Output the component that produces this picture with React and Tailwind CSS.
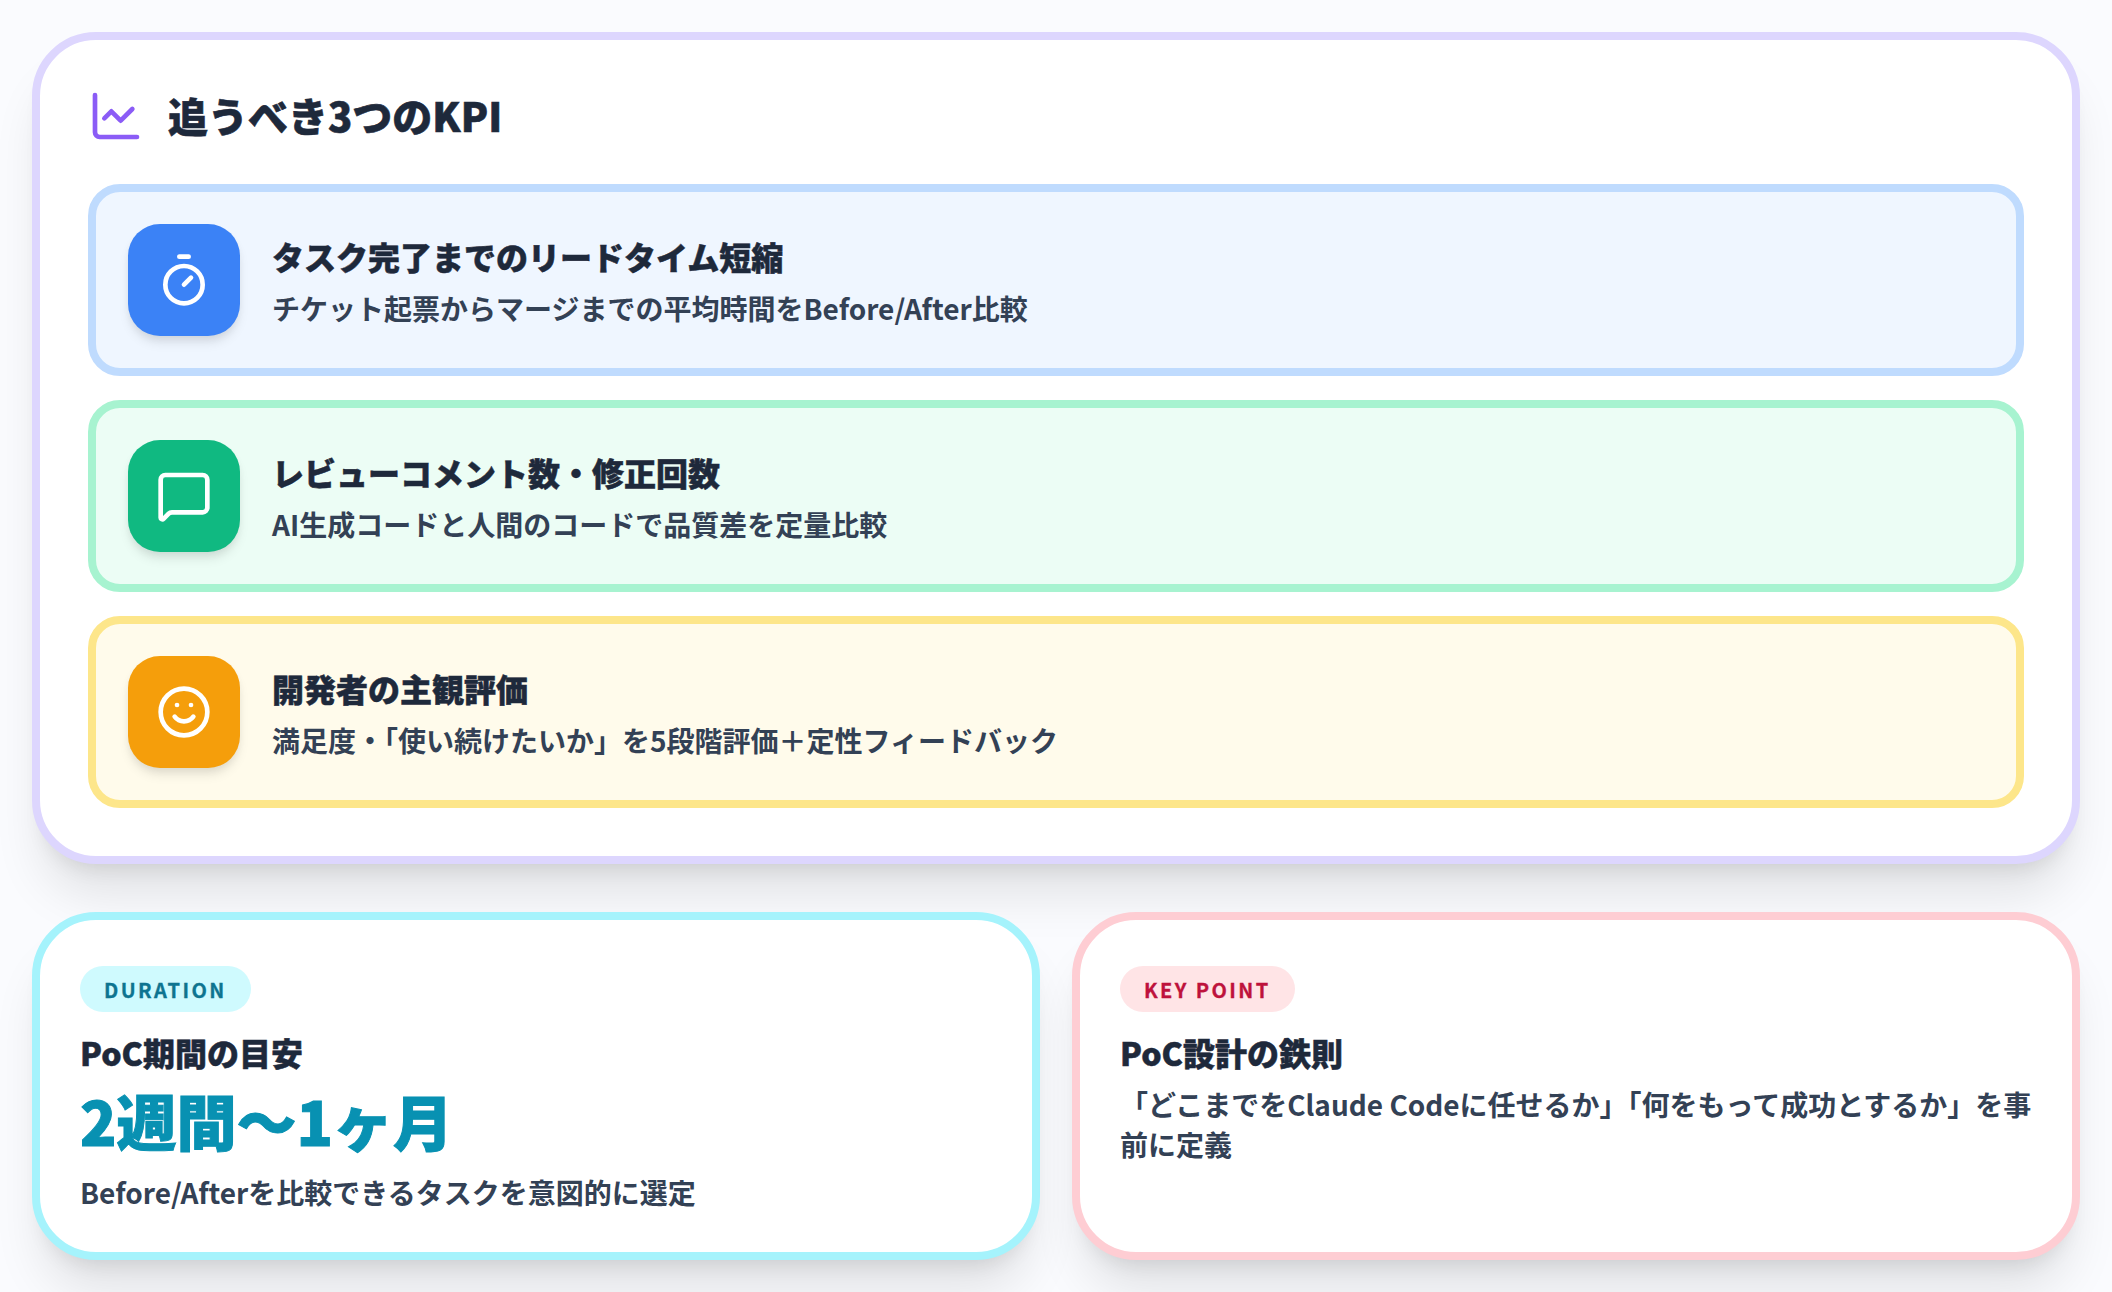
import React from "react";
import { ChartLine, Timer, MessageSquare, Smile } from "lucide-react";

const kpis = [
  {
    title: "タスク完了までのリードタイム短縮",
    desc: "チケット起票からマージまでの平均時間をBefore/After比較",
    Icon: Timer,
    box: "bg-[#eff6ff] border-[#bfdbfe]",
    tile: "bg-[#3b82f6]",
  },
  {
    title: "レビューコメント数・修正回数",
    desc: "AI生成コードと人間のコードで品質差を定量比較",
    Icon: MessageSquare,
    box: "bg-[#ecfdf5] border-[#a7f3d0]",
    tile: "bg-[#10b981]",
  },
  {
    title: "開発者の主観評価",
    desc: "満足度・「使い続けたいか」を5段階評価＋定性フィードバック",
    Icon: Smile,
    box: "bg-[#fffbeb] border-[#fde68a]",
    tile: "bg-[#f59e0b]",
  },
];

const cardShadow = "shadow-[0_40px_50px_-10px_rgba(0,0,0,0.1),0_16px_20px_-12px_rgba(0,0,0,0.1)]";

const KpiRow = ({ title, desc, Icon, box, tile }) => (
  <div className={`flex items-center gap-8 rounded-[32px] border-8 p-8 ${box}`}>
    <div className={`flex size-28 shrink-0 items-center justify-center rounded-[32px] text-white shadow-[0_8px_12px_-2px_rgba(0,0,0,0.1),0_4px_8px_-2px_rgba(0,0,0,0.06)] ${tile}`}>
      <Icon size={56} />
    </div>
    <div>
      <p className="mb-1.5 text-[32px] leading-[50px] font-black text-[#1e293b] [-webkit-text-stroke:0.5px_#1e293b]">{title}</p>
      <p className="text-[28px] leading-[42px] font-semibold text-[#334155]">{desc}</p>
    </div>
  </div>
);

const InfoCard = ({ border, badge, badgeClass, title, children }) => (
  <div className={`rounded-[64px] border-8 bg-white p-10 ${border} ${cardShadow}`}>
    <span className={`mt-1.5 inline-block rounded-full px-6 pt-[9px] pb-[7px] text-[20px] leading-[30px] font-bold tracking-[0.12em] [-webkit-text-stroke:0.3px] ${badgeClass}`}>
      {badge}
    </span>
    <p className="mt-4 text-[32px] leading-[48px] font-black text-[#1e293b] [-webkit-text-stroke:0.5px_#1e293b]">{title}</p>
    {children}
  </div>
);

export default function App() {
  return (
    <div className="flex min-h-[1292px] flex-col gap-12 bg-[#fafbfe] p-8 font-['Noto_Sans_CJK_JP','Noto_Sans',sans-serif]">
      <section className={`rounded-[64px] border-8 border-[#ddd6fe] bg-white p-12 ${cardShadow}`}>
        <div className="mb-10 flex items-center gap-6">
          <ChartLine size={56} className="text-[#8b5cf6]" />
          <h2 className="pb-0.5 text-[40px] leading-[54px] font-black text-[#1e293b] [-webkit-text-stroke:0.6px_#1e293b]">追うべき3つのKPI</h2>
        </div>
        <div className="flex flex-col gap-6">
          {kpis.map((kpi) => (
            <KpiRow key={kpi.title} {...kpi} />
          ))}
        </div>
      </section>

      <div className="grid grid-cols-2 gap-8">
        <InfoCard
          border="border-[#a5f3fc]"
          badge="DURATION"
          badgeClass="bg-[#cffafe] text-[#0e7490]"
          title="PoC期間の目安"
        >
          <p className="mt-2 text-[60px] leading-[72px] font-black text-[#0891b2] [-webkit-text-stroke:1px_#0891b2]">2週間〜1ヶ月</p>
          <p className="mt-4 text-[28px] leading-[40px] font-semibold text-[#334155]">Before/Afterを比較できるタスクを意図的に選定</p>
        </InfoCard>
        <InfoCard
          border="border-[#fecdd3]"
          badge="KEY POINT"
          badgeClass="bg-[#ffe4e6] text-[#be123c]"
          title="PoC設計の鉄則"
        >
          <p className="mt-2 text-[28px] leading-[40px] font-semibold text-[#334155]">
            「どこまでをClaude Codeに任せるか」「何をもって成功とするか」を事前に定義
          </p>
        </InfoCard>
      </div>
    </div>
  );
}
